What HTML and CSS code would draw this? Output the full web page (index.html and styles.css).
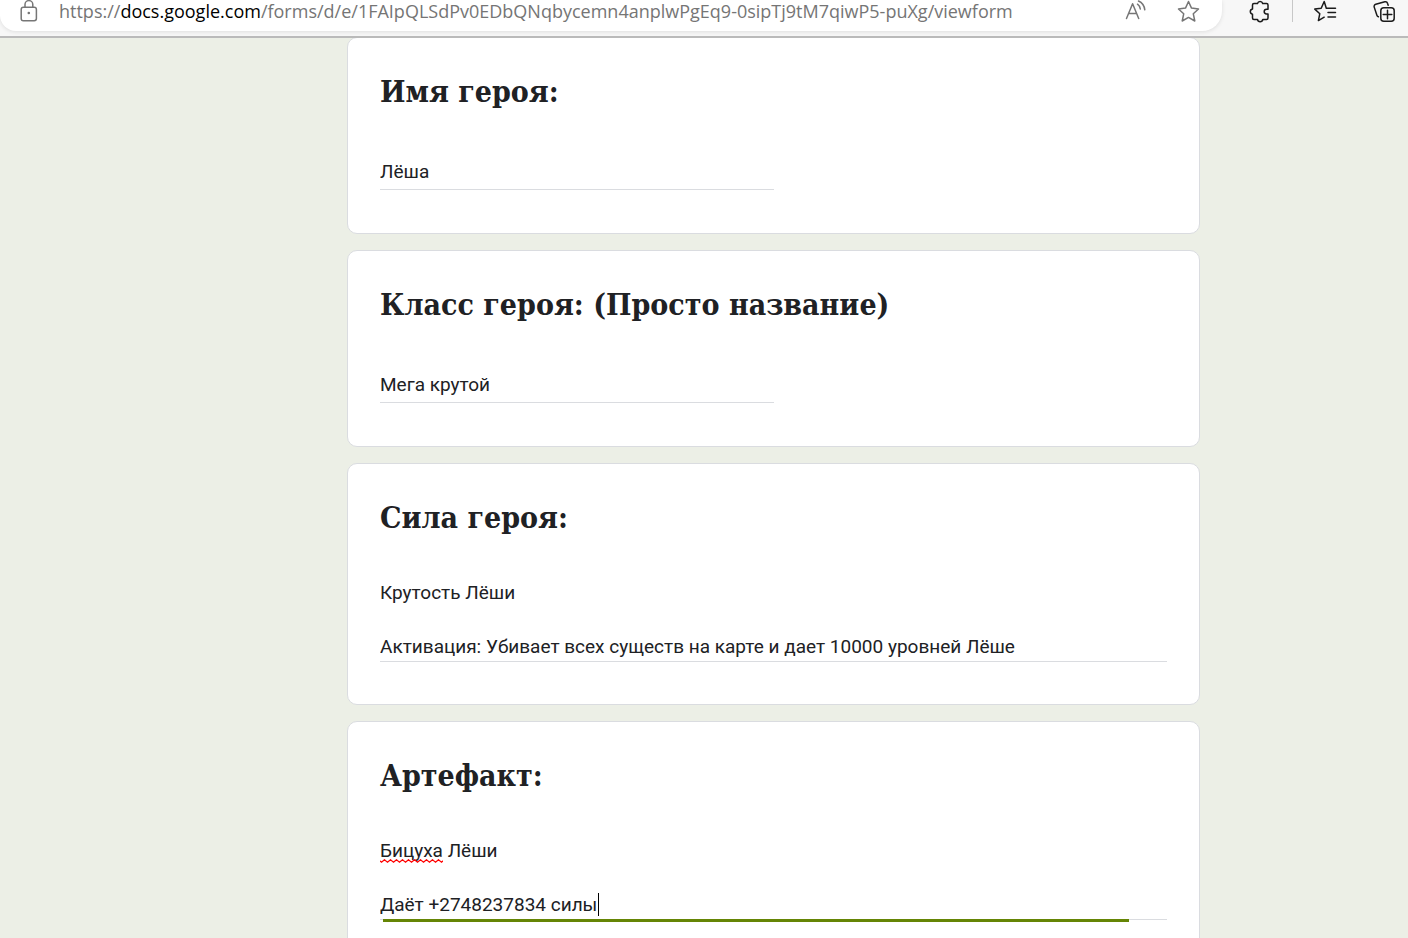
FILE: index.html
```
<!DOCTYPE html>
<html lang="ru">
<head>
    <meta charset="UTF-8">
    <meta name="viewport" content="width=device-width, initial-scale=1.0">
    <title>Создание героя</title>
    <link rel="stylesheet" href="styles.css">
</head>
<body>

    <header class="toolbar">
        <div class="address-bar">
            <button type="button" class="icon-button lock" aria-label="Сведения о сайте">
                <svg width="20" height="24" viewBox="0 0 20 24">
                    <rect x="2.2" y="8.2" width="15.2" height="13.6" rx="2.2"/>
                    <path d="M6 8V5.5a3.9 3.9 0 0 1 7.8 0V8"/>
                    <circle class="dot" cx="9.8" cy="14" r="1.3"/>
                </svg>
            </button>
            <div class="url">https://<span class="domain">docs.google.com</span>/forms/d/e/1FAIpQLSdPv0EDbQNqbycemn4anplwPgEq9-0sipTj9tM7qiwP5-puXg/viewform</div>
            <button type="button" class="icon-button" aria-label="Прочитать вслух">
                <svg width="24" height="24" viewBox="0 0 24 24">
                    <path d="M2.5 19.5 8.6 4.8 14.7 19.5M4.6 14.5h8M13.5 5.2c1.6 1.2 2.5 2.8 2.8 4.8M14.5 2c3.6 1.6 5.8 4.7 6.3 8.8"/>
                </svg>
            </button>
            <button type="button" class="icon-button" aria-label="Добавить в избранное">
                <svg width="24" height="24" viewBox="0 0 24 24">
                    <path d="M12.5 2.5 15.5 9.1 22.5 10 17.3 14.8 18.8 22 12.5 18.4 6.200 22 7.700 14.800 2.500 10 9.500 9.100z"/>
                </svg>
            </button>
        </div>
        <div class="actions">
            <button type="button" class="icon-button" aria-label="Расширения">
                <svg width="24" height="24" viewBox="0 0 24 24">
                    <path d="M6 4.5h3.500a2.700 2.700 0 0 1 5.200 0h3.800A1.500 1.500 0 0 1 20 6v4.200h-1.400a2.300 2.300 0 0 0 0 4.800H20v4a1.500 1.500 0 0 1-1.500 1.500h-3.700a2.700 2.700 0 0 1-5.300 0H6A1.500 1.500 0 0 1 4.500 19v-3.800a2.700 2.700 0 0 1 0-5.300V6A1.500 1.500 0 0 1 6 4.500z"/>
                </svg>
            </button>
            <span class="divider"></span>
            <button type="button" class="icon-button favorites" aria-label="Избранное">
                <svg width="24" height="24" viewBox="0 0 24 24">
                    <path d="M15 9.200h-1.700L11.200 2.500 8.200 9.200 1.800 10.100 6.800 14.700 5.400 21.600 11.200 18.200M15 9.200H22.500M15 13.600H22.500M15 18H22.500"/>
                </svg>
            </button>
            <button type="button" class="icon-button" aria-label="Коллекции">
                <svg width="24" height="24" viewBox="0 0 24 24">
                    <rect x="8.800" y="8.800" width="13.400" height="13.400" rx="3"/>
                    <path d="M15.500 11.200v8.600M11.200 15.500h8.600M16.200 6.300l-.7-2a2.200 2.200 0 0 0-2.700-1.500L3.800 5.200a2.300 2.300 0 0 0-1.600 2.900l2.700 8.100a2.400 2.400 0 0 0 1.500 1.600"/>
                </svg>
            </button>
        </div>
    </header>

    <form class="form-container">
        <section class="card">
            <label for="hero-name">Имя героя:</label>
            <input type="text" id="hero-name" name="hero-name" value="Лёша" spellcheck="false">
        </section>

        <section class="card">
            <label for="hero-class">Класс героя: (Просто название)</label>
            <input type="text" id="hero-class" name="hero-class" value="Мега крутой" spellcheck="false">
        </section>

        <section class="card card-long">
            <label for="hero-power">Сила героя:</label>
            <div class="long-answer">
                <textarea id="hero-power" name="hero-power" rows="3" spellcheck="false">Крутость Лёши

Активация: Убивает всех существ на карте и дает 10000 уровней Лёше</textarea>
            </div>
        </section>

        <section class="card card-long">
            <label for="artifact">Артефакт:</label>
            <div class="long-answer">
                <textarea id="artifact" name="artifact" rows="3" spellcheck="false">Бицуха Лёши

Даёт +2748237834 силы</textarea>
                <svg class="squiggle" width="63" height="4">
                    <defs>
                        <pattern id="wave" width="6" height="4" patternUnits="userSpaceOnUse">
                            <path d="M-1.5 .7 1.5 3.2 4.5 .7 7.5 3.2"/>
                        </pattern>
                    </defs>
                    <rect width="63" height="4" fill="url(#wave)"/>
                </svg>
                <span class="caret"></span>
                <span class="focus-line"></span>
            </div>
        </section>
    </form>

</body>
</html>
```
FILE: styles.css
```
* {
    box-sizing: border-box;
}

body {
    font-family: Roboto, "Liberation Sans", sans-serif;
    background-color: #ecefe6;
    color: #202124;
    margin: 0;
    height: 100vh;
    overflow: hidden;
}

/* Browser toolbar */
.toolbar {
    position: relative;
    z-index: 1;
    display: flex;
    align-items: flex-start;
    height: 38px;
    background-color: #f7f7f7;
    border-bottom: 2px solid #bababa;
}

.address-bar {
    flex: 1;
    display: flex;
    align-items: flex-start;
    gap: 28px;
    height: 31px;
    padding: 0 22px 0 19px;
    background-color: #fff;
    border-radius: 0 0 20px 16px;
    box-shadow: 0 1px 4px rgba(0, 0, 0, 0.1);
}

.lock {
    margin-right: -8px;
}

.url {
    flex: 1;
    font-family: "Open Sans", "Noto Sans", sans-serif;
    font-size: 18px;
    line-height: 22px;
    white-space: nowrap;
    color: #757575;
}

.domain {
    color: #000;
}

.icon-button {
    display: block;
    margin-top: -1px;
    padding: 0;
    border: 0;
    background: none;
    color: #1b1b1b;
    cursor: pointer;
}

.address-bar .icon-button {
    color: #767676;
}

.icon-button svg {
    display: block;
    fill: none;
    stroke: currentColor;
    stroke-width: 1.5;
    stroke-linecap: round;
    stroke-linejoin: round;
}

.icon-button .dot {
    fill: currentColor;
    stroke: none;
}

.actions {
    display: flex;
    align-items: flex-start;
    gap: 20px;
    padding: 0 12px 0 26px;
}

.favorites {
    margin-right: 15px;
}

.divider {
    width: 1px;
    height: 22px;
    background-color: #c8c8c8;
}

/* Form */
.form-container {
    display: flex;
    flex-direction: column;
    gap: 16px;
    max-width: 1200px;
    margin-top: -1px;
    padding-left: 347px;
}

.card {
    padding: 34px 32px 43px;
    background-color: #fff;
    border: 1px solid #dadce0;
    border-radius: 10px;
}

.card-long {
    padding-bottom: 42px;
}

.card label {
    display: block;
    font-family: "DejaVu Serif Condensed", "DejaVu Serif", serif;
    font-size: 30px;
    font-weight: bold;
    line-height: 40px;
}

.card input,
.card textarea {
    display: block;
    width: 100%;
    padding: 0;
    border: 0;
    border-bottom: 1px solid #dadce0;
    outline: none;
    background: none;
    color: inherit;
    font-family: inherit;
    font-size: 19px;
}

.card input {
    width: 50%;
    height: 34px;
    margin-top: 44px;
    padding-bottom: 2px;
}

.card textarea {
    padding-bottom: 1px;
    line-height: 27px;
    resize: none;
    overflow: hidden;
}

.long-answer {
    position: relative;
    margin-top: 41px;
}

.squiggle {
    position: absolute;
    left: 0;
    top: 22px;
    fill: none;
}

.squiggle path {
    stroke: #f00;
    stroke-width: 1.2;
}

.caret {
    position: absolute;
    left: 218px;
    bottom: 4px;
    width: 1px;
    height: 23px;
    background-color: #000;
}

.focus-line {
    position: absolute;
    left: 3px;
    right: 38px;
    bottom: -2px;
    height: 3px;
    background-color: #658505;
}
```
